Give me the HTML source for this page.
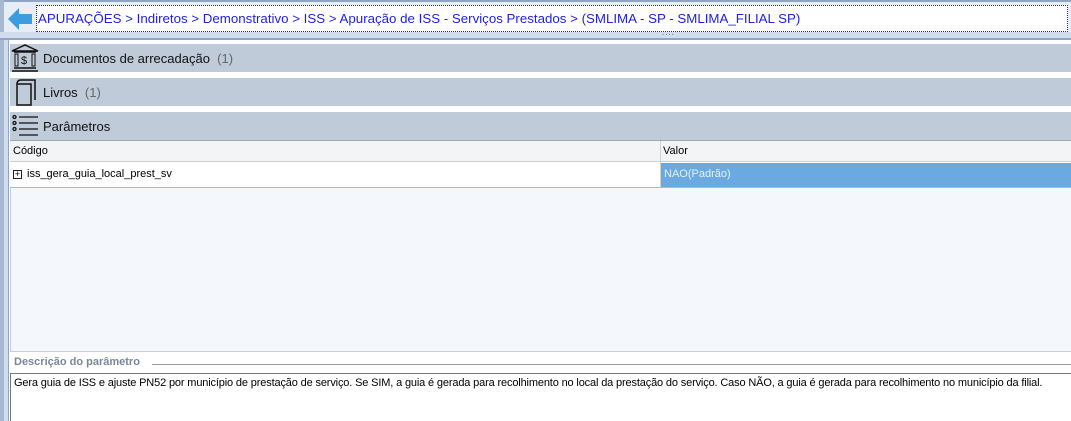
<!DOCTYPE html>
<html><head><meta charset="utf-8"><style>
*{margin:0;padding:0;box-sizing:border-box}
body{width:1071px;height:421px;overflow:hidden;background:#fff;font-family:"Liberation Sans",sans-serif;font-size:12px;position:relative}
.a{position:absolute}
.hdr{position:absolute;left:10px;right:0;height:28px;background:#bfcbd8;font-size:13px;color:#111}
.hdr span{position:absolute;left:33px;top:7px}
.hdr i{font-style:normal;color:#666}
</style></head><body>
<div class="a" style="left:0;top:0;width:1071px;height:40px;background:#d2dcec"></div>
<div class="a" style="left:0;top:0;width:1071px;height:2px;background:#8ea5c5"></div>
<div class="a" style="left:0;top:0;width:4px;height:421px;background:#a7b8d2"></div>
<div class="a" style="left:4px;top:2px;width:1067px;height:34px;background:#e6edf6"></div>
<svg class="a" style="left:7px;top:7px" width="26" height="24"><path d="M1 12 L12 1 L12 7 L25 7 L25 17 L12 17 L12 23 Z" fill="#3d9be0"/></svg>
<div class="a" style="left:36px;top:5px;width:1032px;height:27px;background:#fff;border:1px dotted #2020e0"></div>
<div class="a" style="left:38px;top:11px;font-size:13.3px;color:#2222dd;white-space:nowrap">APURAÇÕES &gt; Indiretos &gt; Demonstrativo &gt; ISS &gt; Apuração de ISS - Serviços Prestados &gt; (SMLIMA - SP - SMLIMA_FILIAL SP)</div>
<div class="a" style="left:0;top:32px;width:1071px;height:7px;background:#d2dcec"></div>
<div class="a" style="left:662px;top:28px;font-size:8px;color:#556;letter-spacing:1px">....</div>
<div class="a" style="left:0;top:38px;width:1071px;height:2px;background:#8ea5c5"></div>
<div class="a" style="left:4px;top:40px;width:5px;height:381px;background:#d2dcec;border-right:1px solid #8ea5c5"></div>
<div class="hdr" style="top:44px"><span>Documentos de arrecadação &nbsp;<i>(1)</i></span>
<svg class="a" style="left:0;top:0" width="30" height="28"><path d="M2 7 L15 1 L28 7 Z M4 8h22 M4 24h22 M2 27h26" stroke="#111" stroke-width="1.5" fill="none"/><rect x="5" y="10" width="3" height="12" fill="none" stroke="#111"/><rect x="22" y="10" width="3" height="12" fill="none" stroke="#111"/><text x="11" y="20" font-size="11" font-family="Liberation Sans" fill="#111">$</text></svg></div>
<div class="hdr" style="top:78px"><span>Livros &nbsp;<i>(1)</i></span>
<svg class="a" style="left:3px;top:0" width="26" height="28"><path d="M8 2h14v20 M4 6h14v21H4Z M4 6 Q4 2 8 2" stroke="#111" stroke-width="1.5" fill="none"/></svg></div>
<div class="hdr" style="top:112px"><span>Parâmetros</span>
<svg class="a" style="left:2px;top:2px" width="28" height="24"><g stroke="#111" stroke-width="1.3" fill="none"><circle cx="2.5" cy="3" r="1.5"/><circle cx="2.5" cy="9" r="1.5"/><circle cx="2.5" cy="15" r="1.5"/><path d="M7 3h19M7 9h19M7 15h19M7 21h19"/></g></svg></div>
<div class="a" style="left:10px;top:140px;right:0;height:1px;background:#9aa"></div>
<div class="a" style="left:10px;top:141px;right:0;height:21px;background:#f3f4f6;border-bottom:1px solid #d0d0d0"></div>
<div class="a" style="left:660px;top:141px;width:1px;height:47px;background:#d0d0d0"></div>
<div class="a" style="left:13px;top:145px;font-size:11px">Código</div>
<div class="a" style="left:663px;top:145px;font-size:11px">Valor</div>
<div class="a" style="left:10px;top:163px;width:650px;height:24px;background:#fff"></div>
<div class="a" style="left:661px;top:163px;right:0;height:24px;background:#6aaae0"></div>
<div class="a" style="left:10px;top:187px;right:0;height:1px;background:#8cc4f0"></div>
<div class="a" style="left:13px;top:170px;width:9px;height:9px;border:1px solid #222;font-size:9px;line-height:7px;text-align:center">+</div>
<div class="a" style="left:27px;top:168px;font-size:11px">iss_gera_guia_local_prest_sv</div>
<div class="a" style="left:664px;top:168px;font-size:11px;color:#e8f0f8">NAO(Padrão)</div>
<div class="a" style="left:10px;top:188px;right:0;height:164px;background:#f4f8fc;border-left:1px solid #ccd;border-bottom:1px solid #ccd"></div>
<div class="a" style="left:14px;top:356px;font-size:11px;font-weight:bold;color:#7a869a">Descrição do parâmetro</div>
<div class="a" style="left:152px;top:364px;right:0;height:1px;background:#999"></div>
<div class="a" style="left:10px;top:373px;right:0;height:48px;border:1px solid #777;border-right:none;border-bottom:none"></div>
<div class="a" style="left:14px;top:377px;font-size:11px;letter-spacing:-0.15px;white-space:nowrap">Gera guia de ISS e ajuste PN52 por município de prestação de serviço. Se SIM, a guia é gerada para recolhimento no local da prestação do serviço. Caso NÃO, a guia é gerada para recolhimento no município da filial.</div>
</body></html>
